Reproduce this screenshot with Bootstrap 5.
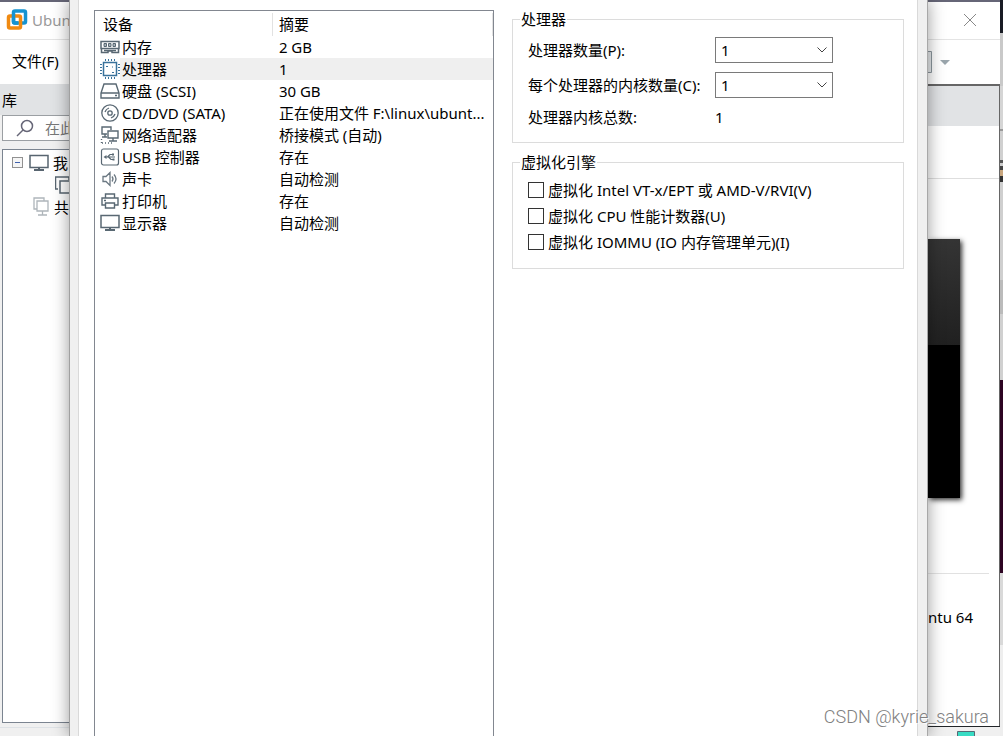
<!DOCTYPE html>
<html lang="zh-CN">
<head>
<meta charset="utf-8">
<meta name="viewport" content="width=device-width, initial-scale=1">
<title>虚拟机设置</title>
<link href="https://cdn.jsdelivr.net/npm/bootstrap@5.3.0/dist/css/bootstrap.min.css" rel="stylesheet">
<style>
body{font-family:"Noto Sans","Noto Sans CJK SC",sans-serif;font-size:15px;line-height:22px;color:#000;background:#f0f0f0}
.shell{height:100vh;overflow:hidden;display:grid;grid-template-columns:69px minmax(0,1fr) 75px}
.side{overflow:hidden;white-space:nowrap}
.side svg,.devices svg{display:block;flex:none}
.titlebar{height:40px;border-top:2px solid #667;border-bottom:1px solid #e4e4e4;background:#fff;padding-bottom:2px}
.app-title{color:#999}
.menubar{height:44px;background:#fff}
.menubar a{font-size:15px;padding-bottom:2px}
.library{height:31px;background:#e1e3e5;padding-left:2px}
.search{height:26px;margin-left:2px;border:1px solid #9b9fa3;border-right:0;background:#fff}
.search input{outline:0}
.search input::placeholder{color:#777}
.tree{margin-left:2px;border:1px solid #7b8490;border-right:0;background:#fff;padding-top:2px}
.tree div{height:22px}
.dialog{position:relative;background:#f0f0f0;border-left:1px solid #a0a0a0;border-right:1px solid #a8a8a8;box-shadow:0 0 16px rgba(0,0,0,.4);padding:0 9px 0 8px}
.page{background:#fff;border:1px solid #d9d9d9;border-width:0 1px;padding:0 13px 0 15px;display:grid;grid-template-columns:400fr 392fr;column-gap:18px}
.listbox{margin-top:10px;border:1px solid #828790;border-bottom:0;overflow:hidden}
.devices{table-layout:fixed;width:100%}
.devices th{font-weight:400;height:25px;padding:0 7px 0 8px;background:linear-gradient(#e2e2e2,#e2e2e2) right 100%/1px 23px no-repeat}
.devices th+th{padding-left:6px}
.devices td{height:22px;padding:0 0 0 6px;overflow:hidden;white-space:nowrap;text-overflow:ellipsis}
.devices td:first-child{padding-left:5px}
.devices td>div{height:22px}
.devices .dev-name{flex:1;padding-left:2px}
.selected .dev-name,.selected td+td{background:#efefef}
.group{border:1px solid #dcdcdc;padding:0 15px}
.group legend{float:none;width:auto;font-size:15px;line-height:22px;margin:0 0 0 -8px;padding:0 1px}
.fields{display:grid;grid-template-columns:187px 118px;row-gap:9px;align-items:center;padding:7px 0 15px}
.fields .form-select{height:26px;padding:0 20px 0 5px;border:1px solid #7a7a7a;border-radius:0;font-size:15px;line-height:24px;color:#000;background:#fff url("data:image/svg+xml,%3Csvg xmlns='http://www.w3.org/2000/svg' viewBox='0 0 10 6'%3E%3Cpath fill='none' stroke='%23444' d='M.5.5 5 5 9.500.5'/%3E%3C/svg%3E") right 5px center/10px 6px no-repeat}
.fields .total{line-height:20px}
.engine{padding-bottom:13px;margin-top:8px}
.option{height:26px;padding:0;margin:0;gap:4px}
.option .form-check-input{float:none;margin:0;width:16px;height:16px;border:1px solid #333;border-radius:0}
.edge{width:3px;background:linear-gradient(#181b24 0 33px,#c9c9c9 33px 86px,#d5d5d5 86px 129px,#999 129px 131px,#d0d0d0 131px 160px,#555 160px 163px,#ccc 163px 166px,#444 166px 170px,#c8a67e 170px 176px,#333 176px 182px,#cfcfcf 182px 280px,#bbb 280px 314px,#d0d0d0 314px 380px,#2d0422 380px 573px,#d9d9d9 573px 645px,#eee 645px)}
.console{border-right:1px solid #666;background:#fff}
.tabstrip{height:42px;border-top:2px solid #666;background:#e1e3e5}
.tabhead{height:53px;border-bottom:1px solid #dedede}
.screen{height:259px;margin:60px 39px 0 0;background:linear-gradient(170deg,#353535,#202020) 0 0/100% 106px no-repeat #000;box-shadow:2px 2px 5px #333}
.rule{margin:75px 10px 0 0;color:#888}
.watermark{position:absolute;right:14px;bottom:8px;font:18px/22px "Roboto",sans-serif;font-weight:300;color:#808080;text-shadow:1px 1px 1px #fff}
</style>
</head>
<body>
<svg width="0" height="0" class="position-absolute"><defs>
<symbol id="monitor" viewBox="0 0 20 18"><path fill="none" stroke="currentColor" stroke-width="1.5" d="M1 1.500h18v12H1z"/><path fill="none" stroke="currentColor" stroke-width="2" d="M5 16h10M10 14v2"/></symbol>
</defs></svg>
<div class="shell">
  <aside class="side d-flex flex-column">
    <div class="titlebar app-title d-flex align-items-center ps-1 flex-shrink-0">
      <svg width="28" height="22" viewBox="0 0 28 22" fill="none" stroke-width="3.500"><rect x="9.500" y="2" width="12" height="12" rx="1.500" stroke="#1593d1"/><rect x="4.500" y="7" width="12" height="12" rx="1.500" stroke="#f08a12"/><path stroke="#1593d1" d="M9.500 5v7.500q0 1.500 1.500 1.500h3"/></svg>Ubun
    </div>
    <div class="menubar d-flex align-items-center flex-shrink-0 px-2"><a href="#" class="text-reset text-decoration-none ms-1">文件(F)</a></div>
    <div class="library d-flex align-items-center flex-shrink-0">库</div>
    <div class="search d-flex align-items-center flex-shrink-0 ps-2">
      <svg class="ms-1" width="22" height="20" viewBox="0 0 22 20" fill="none" stroke="#667" stroke-width="1.500"><circle cx="12" cy="8" r="5.500"/><path d="m8 12-6 6"/></svg>
      <input type="text" class="border-0 p-0 bg-transparent ms-2" aria-label="搜索" placeholder="在此">
    </div>
    <div class="tree flex-grow-1 mt-2">
      <div class="d-flex align-items-center"><svg class="ms-2" width="14" height="14" viewBox="0 0 14 14" fill="none"><rect x="1.500" y="1.500" width="10" height="10" fill="#f5f5f5" stroke="#919191"/><path stroke="#3f61ad" d="M4 6.500h5"/></svg><svg class="ms-1" width="20" height="18" color="#586570"><use href="#monitor"/></svg><span class="ms-1">我</span></div>
      <div class="d-flex align-items-center ps-5"><svg class="ms-1" width="20" height="18" viewBox="1 0 20 18" fill="none" stroke="#586570" stroke-width="1.500"><path d="M4 13H1.500V1H15v3M6 5h14v12H6z"/></svg></div>
      <div class="d-flex align-items-center"><svg class="ms-4" width="27" height="20" viewBox="-6 0 27 20" fill="none" stroke="#aeb5ba" stroke-width="1.300"><path d="M4 12H1V1h10v3M4 4h11v10H4zM9.500 14v4M5 18h9"/></svg><span>共</span></div>
    </div>
    <div class="flex-shrink-0 border-bottom" style="height:5px"></div><div class="flex-shrink-0" style="height:8px"></div>
  </aside>

  <main class="dialog d-grid">
    <div class="page">
      <div class="listbox">
        <table class="devices">
          <colgroup><col style="width:44.700%"><col></colgroup>
          <thead><tr><th scope="col">设备</th><th scope="col">摘要</th></tr></thead>
          <tbody>
          <tr><td><div class="d-flex align-items-center"><svg width="20" height="20" viewBox="0 0 20 20" fill="none" stroke="#596873"><path stroke-width="1.500" d="M1 4.500h18v7H1z"/><path fill="#a9b3ba" d="M4 6.500h2.500v3H4zM8.500 6.500H11v3H8.500zM13 6.500h2.500v3H13z"/><path stroke-width="1.500" d="M1.500 12v3.500H8V14h4v1.500h6.500V12M4 13.500h12"/></svg><span class="dev-name">内存</span></div></td><td>2 GB</td></tr>
          <tr class="selected"><td><div class="d-flex align-items-center"><svg width="20" height="20" viewBox="0 0 20 20" fill="none" stroke="#39729b"><rect x="3.500" y="3.500" width="13" height="13" stroke-width="1.500"/><path d="M5.500 0v2M8.500 0v2M11.500 0v2M14.500 0v2M5.500 18v2M8.500 18v2M11.500 18v2M14.500 18v2M0 5.500h2M0 8.500h2M0 11.500h2M0 14.500h2M18 5.500h2M18 8.500h2M18 11.500h2M18 14.500h2M6 7.500h2M12 13.500h2M12 8h1"/></svg><span class="dev-name">处理器</span></div></td><td>1</td></tr>
          <tr><td><div class="d-flex align-items-center"><svg width="20" height="20" viewBox="0 0 20 20" fill="none" stroke="#596873" stroke-width="1.400"><path d="M4 3h12l3 9v5H1v-5zM1 12h18M15 14.500h2"/></svg><span class="dev-name">硬盘 (SCSI)</span></div></td><td>30 GB</td></tr>
          <tr><td><div class="d-flex align-items-center"><svg width="20" height="20" viewBox="0 0 20 20" fill="none" stroke="#596873" stroke-width="1.300"><circle cx="10" cy="10" r="8.200"/><circle cx="10" cy="10" r="2.200"/><path d="M5 9q1-3 4-4M11 15q3-1 4-4"/></svg><span class="dev-name">CD/DVD (SATA)</span></div></td><td>正在使用文件 F:\linux\ubunt...</td></tr>
          <tr><td><div class="d-flex align-items-center"><svg width="20" height="20" viewBox="0 0 20 20" fill="none" stroke="#596873" stroke-width="1.400"><path d="M7 9H2V2h9v3M5 9v3M2 12h5M8 6h10v7H8zM13 13v3M9 16h8"/><path stroke-dasharray="1 2" d="M1.500 14v4M2 18h11"/></svg><span class="dev-name">网络适配器</span></div></td><td>桥接模式 (自动)</td></tr>
          <tr><td><div class="d-flex align-items-center"><svg width="20" height="20" viewBox="0 0 20 20" fill="none" stroke="#596873" stroke-width="1.200"><rect x="1.500" y="2" width="17" height="16" rx="2"/><path d="M5 10h10M7.500 10 10 7.500h2.500M8.500 10l2.500 2.500h2"/><path fill="#596873" stroke="none" d="m3.500 10 3-2v4zM12 6.500h2v2h-2zM12.500 11.500h2v2h-2z"/></svg><span class="dev-name">USB 控制器</span></div></td><td>存在</td></tr>
          <tr><td><div class="d-flex align-items-center"><svg width="20" height="20" viewBox="0 0 20 20" fill="none" stroke="#6b7882" stroke-width="1.300"><path d="M3 7.500h3l4-4v13l-4-4H3zM12 7.500q2 2.500 0 5M14 5.500q4 4.500 0 9"/></svg><span class="dev-name">声卡</span></div></td><td>自动检测</td></tr>
          <tr><td><div class="d-flex align-items-center"><svg width="20" height="20" viewBox="0 0 20 20" fill="none" stroke="#596873" stroke-width="1.400"><path d="M5.500 7V3h9v4M5 14H2V7h16v7h-3M5.500 12h9v5h-9zM4 9.500h2"/></svg><span class="dev-name">打印机</span></div></td><td>存在</td></tr>
          <tr><td><div class="d-flex align-items-center"><svg width="20" height="18" color="#596873"><use href="#monitor"/></svg><span class="dev-name">显示器</span></div></td><td>自动检测</td></tr>
          </tbody>
        </table>
      </div>
      <form class="pt-2">
        <fieldset class="group">
          <legend>处理器</legend>
          <div class="fields">
            <label for="cpus">处理器数量(P):</label><select id="cpus" class="form-select"><option>1</option><option>2</option></select>
            <label for="cores">每个处理器的内核数量(C):</label><select id="cores" class="form-select"><option>1</option><option>2</option></select>
            <span class="total">处理器内核总数:</span><output class="total" for="cpus cores">1</output>
          </div>
        </fieldset>
        <fieldset class="group engine">
          <legend>虚拟化引擎</legend>
          <div class="form-check option d-flex align-items-center mt-1"><input class="form-check-input" type="checkbox" id="vt"><label for="vt">虚拟化 Intel VT-x/EPT 或 AMD-V/RVI(V)</label></div>
          <div class="form-check option d-flex align-items-center"><input class="form-check-input" type="checkbox" id="perf"><label for="perf">虚拟化 CPU 性能计数器(U)</label></div>
          <div class="form-check option d-flex align-items-center"><input class="form-check-input" type="checkbox" id="iommu"><label for="iommu">虚拟化 IOMMU (IO 内存管理单元)(I)</label></div>
        </fieldset>
      </form>
    </div>
  </main>

  <aside class="side d-flex">
    <div class="flex-grow-1 d-flex flex-column">
      <div class="titlebar d-flex align-items-center justify-content-end pe-4 flex-shrink-0"><button type="button" class="border-0 bg-transparent p-0" aria-label="关闭"><svg width="12" height="12" viewBox="0 0 12 12" stroke="#888"><path d="m0 0 12 12M12 0 0 12"/></svg></button></div>
      <div class="menubar d-flex align-items-center flex-shrink-0"><svg width="24" height="24" viewBox="0 0 24 24"><path fill="#e7eaec" stroke="#8d989f" d="M-1 1.500h4.500v21H-1z"/><path fill="#9aa5ac" d="M12 10h10l-5 5z"/></svg></div>
      <div class="console flex-grow-1 d-flex flex-column">
        <div class="tabstrip flex-shrink-0"></div>
        <div class="tabhead flex-shrink-0"></div>
        <div class="screen flex-shrink-0"></div>
        <hr class="rule">
        <div class="pt-4"><div class="pt-2">ntu 64</div></div>
      </div>
      <div class="d-flex flex-shrink-0 justify-content-end border-top border-dark pt-1 pe-4" style="height:10px"><svg width="20" height="6" viewBox="0 0 20 6"><path fill="#38dcc4" stroke="#576975" d="M1.500.500h17V8h-17z"/></svg></div>
    </div>
    <div class="edge"></div>
  </aside>
</div>
<div class="watermark">CSDN @kyrie_sakura</div>
<script src="https://cdn.jsdelivr.net/npm/bootstrap@5.3.0/dist/js/bootstrap.bundle.min.js"></script>
</body>
</html>
